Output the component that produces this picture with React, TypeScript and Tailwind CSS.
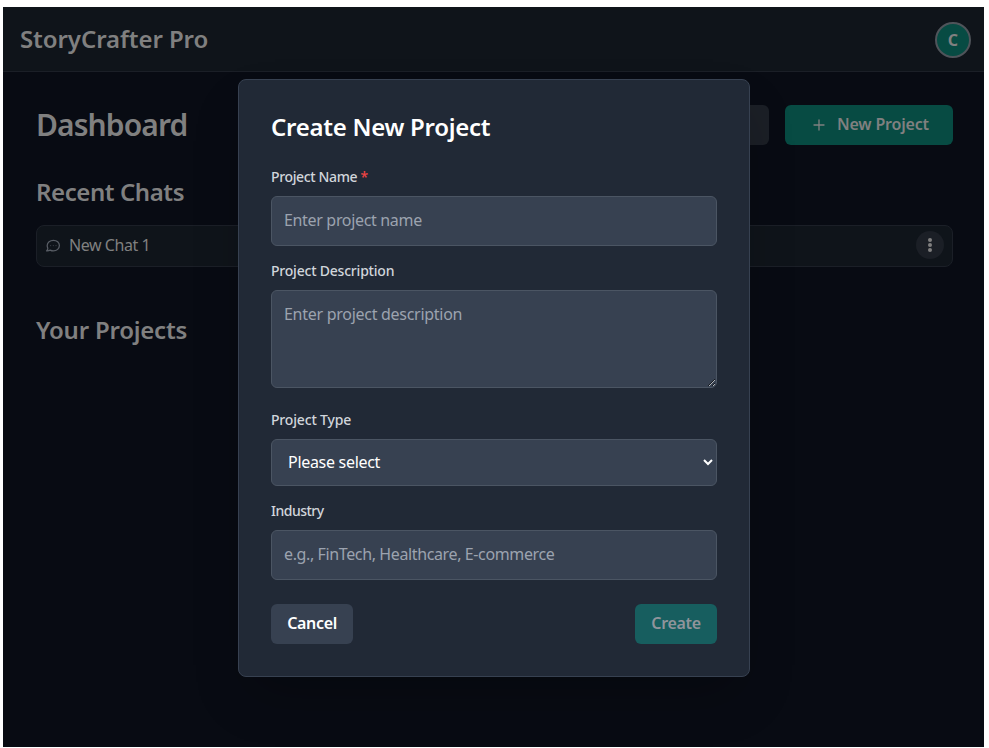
const field =
  "block w-full rounded-md border border-[#4b5563] bg-[#374151] text-base text-white placeholder:text-[#9ca3af] outline-none";
const label = "block text-sm leading-5 font-medium text-[#d1d5db]";

function Header() {
  return (
    <header className="flex h-[65px] items-center justify-between border-b border-[#1b1f27] bg-[#0f141a] pr-[13px] pl-[17px]">
      <span className="text-2xl font-semibold tracking-[-0.08px] text-[#808080]">StoryCrafter Pro</span>
      <div className="mt-[2px] flex size-9 items-center justify-center rounded-full border-2 border-[#4f545a] bg-[#074b43] text-base font-bold text-[#808080]">
        C
      </div>
    </header>
  );
}

function ChatIcon() {
  return (
    <svg className="mt-px size-4" viewBox="0 0 16 16" fill="none" stroke="#585d65" strokeWidth="1.25" strokeLinecap="round" strokeLinejoin="round">
      <path d="M8.4 2.3c3.4 0 6 2.3 6 5.3s-2.6 5.3-6 5.3c-1.2 0-2.3-.3-3.2-.8-1 .7-2.3 1-3.7.8.9-.7 1.4-1.6 1.3-2.6-.4-.8-.6-1.7-.6-2.7 0-3 2.8-5.3 6.2-5.3Z" />
      <path d="M5.6 7.6h.01M8.3 7.6h.01M11 7.6h.01" strokeOpacity="0.6" />
    </svg>
  );
}

function PlusIcon() {
  return (
    <svg className="size-4" viewBox="0 0 16 16" fill="none" stroke="currentColor" strokeWidth="1.3" strokeLinecap="round">
      <path d="M8 3v10M3 8h10" />
    </svg>
  );
}

function Dashboard() {
  return (
    <main className="flex flex-col pt-[33px] pr-[31px] pl-[33px] text-[#808080]">
      <div className="flex h-10 items-center justify-between">
        <h1 className="mb-px text-[30px] leading-9 font-semibold tracking-[-0.9px]">Dashboard</h1>
        <div className="flex gap-4">
          <div className="h-10 w-36 rounded-md bg-[#1b1f26]" />
          <button className="flex h-10 w-[168px] items-center rounded-md bg-[#074b43] pl-[26px] font-semibold">
            <PlusIcon />
            <span className="mb-[2px] ml-[10px] tracking-[-0.18px]">New Project</span>
          </button>
        </div>
      </div>
      <h2 className="mt-[31px] text-2xl font-semibold tracking-[-0.42px]">Recent Chats</h2>
      <div className="mt-[17px] flex h-[42px] items-center rounded-lg border border-[#1b1f27] bg-[#0f141a] px-2 pb-[2px]">
        <ChatIcon />
        <span className="ml-2 flex-1 text-base tracking-[-0.45px]">New Chat 1</span>
        <span className="flex size-7 flex-col items-center justify-center gap-px rounded-full bg-[#1b1f26]">
          <i className="size-1 rounded-full bg-[#808080]" />
          <i className="size-1 rounded-full bg-[#808080]" />
          <i className="size-1 rounded-full bg-[#808080]" />
        </span>
      </div>
      <h2 className="mt-[47px] text-2xl font-semibold tracking-[-0.23px]">Your Projects</h2>
    </main>
  );
}

function ProjectDialog() {
  return (
    <div role="dialog" className="flex h-[598px] w-[512px] flex-col rounded-lg border border-[#374151] bg-[#212936] px-8 pt-[31px] shadow-2xl">
      <h2 className="text-2xl font-semibold tracking-[-0.28px] text-white">Create New Project</h2>
      <label className={`${label} mt-6 tracking-[-0.36px]`}>
        Project Name <span className="text-[#ef4444]">*</span>
      </label>
      <input className={`${field} mt-[9px] h-[50px] px-3 pb-[2px] tracking-[-0.33px]`} placeholder="Enter project name" />
      <label className={`${label} mt-[15px] tracking-[-0.21px]`}>Project Description</label>
      <textarea className={`${field} mt-[9px] h-[98px] resize-y px-3 py-[11px] tracking-[-0.28px]`} placeholder="Enter project description" />
      <label className={`${label} mt-[22px] tracking-[-0.17px]`}>Project Type</label>
      <select className={`${field} mt-[9px] h-[47px] px-3 pb-[2px] tracking-[-0.3px]`}>
        <option>Please select</option>
      </select>
      <label className={`${label} mt-[15px] tracking-[-0.5px]`}>Industry</label>
      <input className={`${field} mt-[9px] h-[50px] px-3 pb-[2px] tracking-[-0.38px]`} placeholder="e.g., FinTech, Healthcare, E-commerce" />
      <div className="mt-6 flex justify-between">
        <button className="h-10 w-[82px] rounded-md bg-[#374151] pb-[2px] font-semibold tracking-[-0.33px] text-white">Cancel</button>
        <button className="h-10 w-[82px] rounded-md bg-[#175e5f] pb-[2px] font-semibold tracking-[-0.33px] text-[#90949b]">Create</button>
      </div>
    </div>
  );
}

export default function App() {
  return (
    <div className="h-[748px] w-[989px] overflow-hidden bg-white pt-[7px] pl-[3px] font-['Noto_Sans',sans-serif]">
      <div className="relative h-[740px] w-[981px] overflow-hidden bg-[#080b13]">
        <Header />
        <Dashboard />
        <div className="absolute inset-0 flex items-start justify-center pt-[72px] pl-[1px]">
          <ProjectDialog />
        </div>
      </div>
    </div>
  );
}
